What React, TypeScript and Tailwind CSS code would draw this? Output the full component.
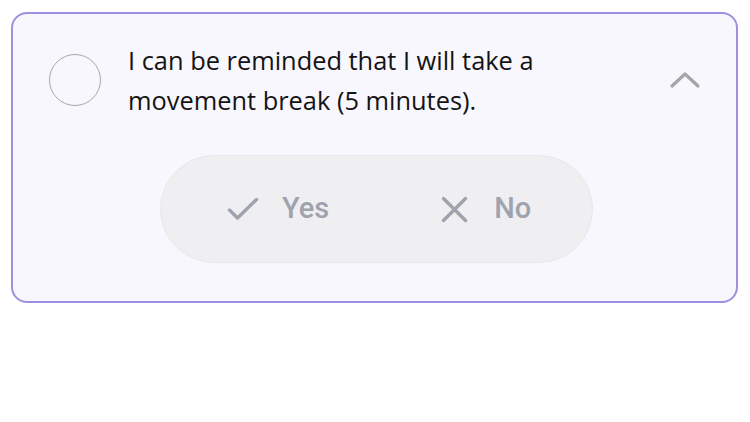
import React from "react";

export default function App() {
  return (
    <div className="w-[750px] h-[422px] bg-white pl-[11px] pt-[12px]">
      <div className="w-[727px] h-[291px] rounded-[16px] border-2 border-[#a08fe0] bg-[#f9f7fe] pt-[26px]">
        <div className="flex items-center">
          <div className="ml-[36px] w-[52px] h-[52px] rounded-full border-[1.5px] border-[#a9a9a9] shrink-0" />
          <div
            className="ml-[27px] w-[460px] text-[25.4px] leading-[40px] text-[#141414]"
            style={{ fontFamily: '"Open Sans", "Noto Sans", sans-serif' }}
          >
            I can be reminded that I will take a movement break (5 minutes).
          </div>
          <svg
            className="ml-[81px]"
            width="32"
            height="20"
            viewBox="0 0 32 20"
            fill="none"
          >
            <polyline
              points="3,16 16,4 29,16"
              stroke="#a5a5a5"
              strokeWidth="3.2"
              strokeLinecap="round"
              strokeLinejoin="round"
            />
          </svg>
        </div>
        <div className="mt-[35px] ml-[147px] w-[433px] h-[108px] rounded-full bg-[#efeff2] border border-[#e8e8ec] flex items-center pl-[66px]">
          <div className="flex items-center">
            <svg width="32" height="24" viewBox="0 0 32 24" fill="none">
              <polyline
                points="2.5,13 10.5,21 29.5,2.5"
                stroke="#9ea3ad"
                strokeWidth="3.4"
                strokeLinecap="round"
                strokeLinejoin="round"
              />
            </svg>
            <span
              className="ml-[23px] text-[29px] font-medium text-[#9ea3ad]"
              style={{ fontFamily: 'Roboto, "Liberation Sans", sans-serif' }}
            >
              Yes
            </span>
          </div>
          <div className="flex items-center ml-[112px]">
            <svg width="27" height="27" viewBox="0 0 27 27" fill="none">
              <path
                d="M2.5 2.5 L24.5 24.5 M24.5 2.5 L2.5 24.5"
                stroke="#9ea3ad"
                strokeWidth="3.4"
                strokeLinecap="round"
              />
            </svg>
            <span
              className="ml-[26px] text-[29px] font-medium text-[#9ea3ad]"
              style={{ fontFamily: 'Roboto, "Liberation Sans", sans-serif' }}
            >
              No
            </span>
          </div>
        </div>
      </div>
    </div>
  );
}
